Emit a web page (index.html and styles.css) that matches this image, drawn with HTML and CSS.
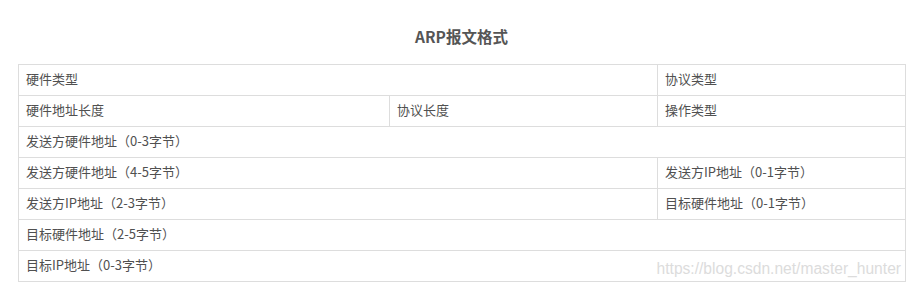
FILE: index.html
```html
<!DOCTYPE html>
<html lang="zh">
<head>
<meta charset="utf-8">
<link rel="stylesheet" href="styles.css">
</head>
<body>
<div class="page">
  <div class="title">ARP报文格式</div>
  <div class="table-wrap">
    <table class="arp">
      <colgroup>
        <col class="c1">
        <col class="c2">
        <col class="c3">
      </colgroup>
      <tr><td colspan="2">硬件类型</td><td>协议类型</td></tr>
      <tr><td>硬件地址长度</td><td>协议长度</td><td>操作类型</td></tr>
      <tr><td colspan="3">发送方硬件地址（0-3字节）</td></tr>
      <tr><td colspan="2">发送方硬件地址（4-5字节）</td><td>发送方IP地址（0-1字节）</td></tr>
      <tr><td colspan="2">发送方IP地址（2-3字节）</td><td>目标硬件地址（0-1字节）</td></tr>
      <tr><td colspan="3">目标硬件地址（2-5字节）</td></tr>
      <tr><td colspan="3">目标IP地址（0-3字节）</td></tr>
    </table>
    <div class="watermark">https://blog.csdn.net/master_hunter</div>
  </div>
</div>
</body>
</html>
```
FILE: styles.css
```css
html, body {
  margin: 0;
  padding: 0;
  background: #fff;
}
.page {
  padding: 0 0 0 18px;
  width: 887px;
  font-family: "Noto Sans CJK SC", "Noto Sans", sans-serif;
}
.title {
  height: 64px;
  line-height: 72px;
  text-align: center;
  font-size: 15.5px;
  font-weight: bold;
  color: #555555;
  box-sizing: border-box;
}
.table-wrap {
  position: relative;
}
.arp {
  border-collapse: collapse;
  table-layout: fixed;
  width: 887px;
  font-size: 13px;
  color: #505050;
}
.c1 { width: 371px; }
.c2 { width: 268px; }
.c3 { width: 248px; }
.arp td {
  border: 1px solid #dddddd;
  height: 31px;
  padding: 0 7px 2px;
  box-sizing: border-box;
  line-height: 16px;
  vertical-align: middle;
  white-space: nowrap;
}
.watermark {
  position: absolute;
  right: 4px;
  bottom: 4px;
  font-family: "Liberation Sans", Arial, sans-serif;
  font-size: 15.6px;
  color: #dcdcdc;
}
```
